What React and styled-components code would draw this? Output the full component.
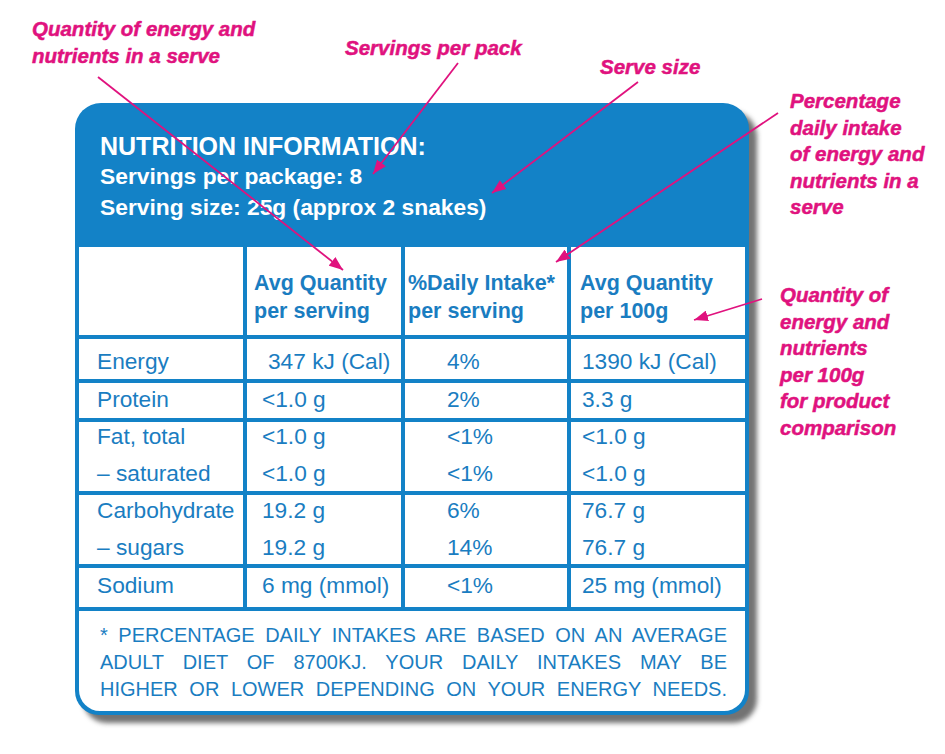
import React from 'react';
import styled, { createGlobalStyle } from 'styled-components';

const BLUE = '#1382c7';
const INK = '#1a7dc1';
const PINK = '#e0127e';

const GlobalStyle = createGlobalStyle`
  body {
    margin: 0;
    background: #fff;
    font-family: "Liberation Sans", Arial, sans-serif;
  }
`;

const Page = styled.div`
  position: relative;
  width: 945px;
  height: 754px;
  padding: 103px 0 0 75px;
  box-sizing: border-box;
  overflow: hidden;
  background: #fff;
`;

const Card = styled.div`
  width: 674px;
  background: ${BLUE};
  border-radius: 26px 26px 24px 24px;
  box-shadow: 8px 8px 5px rgba(40, 40, 40, 0.65);
  font-family: "Liberation Sans", Arial, sans-serif;
`;

const Header = styled.div`
  height: 144px;
  box-sizing: border-box;
  padding: 28px 25px 0;
  color: #fff;
  font-weight: 700;
`;

const Title = styled.div`
  font-size: 25px;
  line-height: 30px;
`;

const SubLine = styled.div`
  font-size: 22.8px;
  line-height: 31px;
  &:first-of-type { margin-top: 2px; }
`;

const Grid = styled.div`
  display: grid;
  grid-template-columns: 164px 154px 162px 174px;
  gap: 4px;
  padding: 0 4px 4px;
`;

const HeadCell = styled.div`
  background: #fff;
  height: 88px;
  box-sizing: border-box;
  padding: 22px 0 0 ${p => p.$pad}px;
  color: ${INK};
  font-weight: 700;
  font-size: 21.5px;
  line-height: 28px;
`;

const Cell = styled.div`
  background: #fff;
  height: ${p => p.$h}px;
  box-sizing: border-box;
  padding: ${p => p.$pt}px 0 0 ${p => p.$pad}px;
  display: flex;
  flex-direction: column;
  gap: 11px;
  color: ${INK};
  font-size: 22.7px;
  line-height: 26px;
  white-space: nowrap;
`;

const Footer = styled.div`
  grid-column: 1 / -1;
  background: #fff;
  height: 100px;
  box-sizing: border-box;
  padding: 11px 18px 0 21px;
  border-radius: 0 0 21px 21px;
  color: ${INK};
  font-size: 20px;
  line-height: 27px;
`;

const FootLine = styled.div`
  text-align: justify;
  text-align-last: justify;
`;

// pink callouts round the label; heavier than plain bold in the source
const Callout = styled.div`
  position: absolute;
  left: ${p => p.$x}px;
  top: ${p => p.$y}px;
  color: ${PINK};
  font-family: "Liberation Sans", Arial, sans-serif;
  font-weight: 700;
  font-style: italic;
  font-size: 20.5px;
  line-height: ${p => p.$lh || 27}px;
  white-space: nowrap;
  -webkit-text-stroke: 0.5px ${PINK};
`;

const Arrows = styled.svg`
  position: absolute;
  left: 0;
  top: 0;
  pointer-events: none;
`;

const cols = [18, 15, 42, 11];

const rows = [
  { h: 40, pt: 9, cells: [['Energy'], ['347 kJ (Cal)'], ['4%'], ['1390 kJ (Cal)']], pad: { 1: 21 } },
  { h: 35, pt: 3, cells: [['Protein'], ['<1.0 g'], ['2%'], ['3.3 g']] },
  { h: 69, pt: 1, cells: [['Fat, total', '– saturated'], ['<1.0 g', '<1.0 g'], ['<1%', '<1%'], ['<1.0 g', '<1.0 g']] },
  { h: 69, pt: 2, cells: [['Carbohydrate', '– sugars'], ['19.2 g', '19.2 g'], ['6%', '14%'], ['76.7 g', '76.7 g']] },
  { h: 39, pt: 4, cells: [['Sodium'], ['6 mg (mmol)'], ['<1%'], ['25 mg (mmol)']] },
];

const arrows = [
  [98, 77, 343, 270],
  [458, 63, 373, 174],
  [638, 82, 492, 193],
  [778, 113, 556, 262],
  [762, 299, 694, 320],
];

export default function App() {
  return (
    <Page>
      <GlobalStyle />
      <Card>
        <Header>
          <Title>NUTRITION INFORMATION:</Title>
          <SubLine>Servings per package: 8</SubLine>
          <SubLine>Serving size: 25g (approx 2 snakes)</SubLine>
        </Header>
        <Grid>
          <HeadCell $pad={0} />
          <HeadCell $pad={7}>Avg Quantity<br />per serving</HeadCell>
          <HeadCell $pad={3}>%Daily Intake*<br />per serving</HeadCell>
          <HeadCell $pad={9}>Avg Quantity<br />per 100g</HeadCell>
          {rows.map((r, i) =>
            r.cells.map((lines, c) => (
              <Cell key={i + '-' + c} $h={r.h} $pt={r.pt} $pad={(r.pad && r.pad[c]) || cols[c]}>
                {lines.map(t => <span key={t}>{t}</span>)}
              </Cell>
            ))
          )}
          <Footer>
            <FootLine>* PERCENTAGE DAILY INTAKES ARE BASED ON AN AVERAGE</FootLine>
            <FootLine>ADULT DIET OF 8700KJ. YOUR DAILY INTAKES MAY BE</FootLine>
            <FootLine>HIGHER OR LOWER DEPENDING ON YOUR ENERGY NEEDS.</FootLine>
          </Footer>
        </Grid>
      </Card>

      <Callout $x={32} $y={15}>Quantity of energy and<br />nutrients in a serve</Callout>
      <Callout $x={345} $y={34}>Servings per pack</Callout>
      <Callout $x={600} $y={53}>Serve size</Callout>
      <Callout $x={790} $y={88} $lh={26.5}>
        Percentage<br />daily intake<br />of energy and<br />nutrients in a<br />serve
      </Callout>
      <Callout $x={780} $y={282} $lh={26.5}>
        Quantity of<br />energy and<br />nutrients<br />per 100g<br />for product<br />comparison
      </Callout>

      <Arrows width="945" height="754" viewBox="0 0 945 754">
        <defs>
          <marker id="head" markerUnits="userSpaceOnUse" markerWidth="15" markerHeight="11"
            refX="14" refY="5.5" orient="auto">
            <path d="M0,0 L14,5.5 L0,11 Z" fill={PINK} />
          </marker>
        </defs>
        {arrows.map(([x1, y1, x2, y2], i) => (
          <line key={i} x1={x1} y1={y1} x2={x2} y2={y2} stroke={PINK} strokeWidth="1.8"
            markerEnd="url(#head)" />
        ))}
      </Arrows>
    </Page>
  );
}
